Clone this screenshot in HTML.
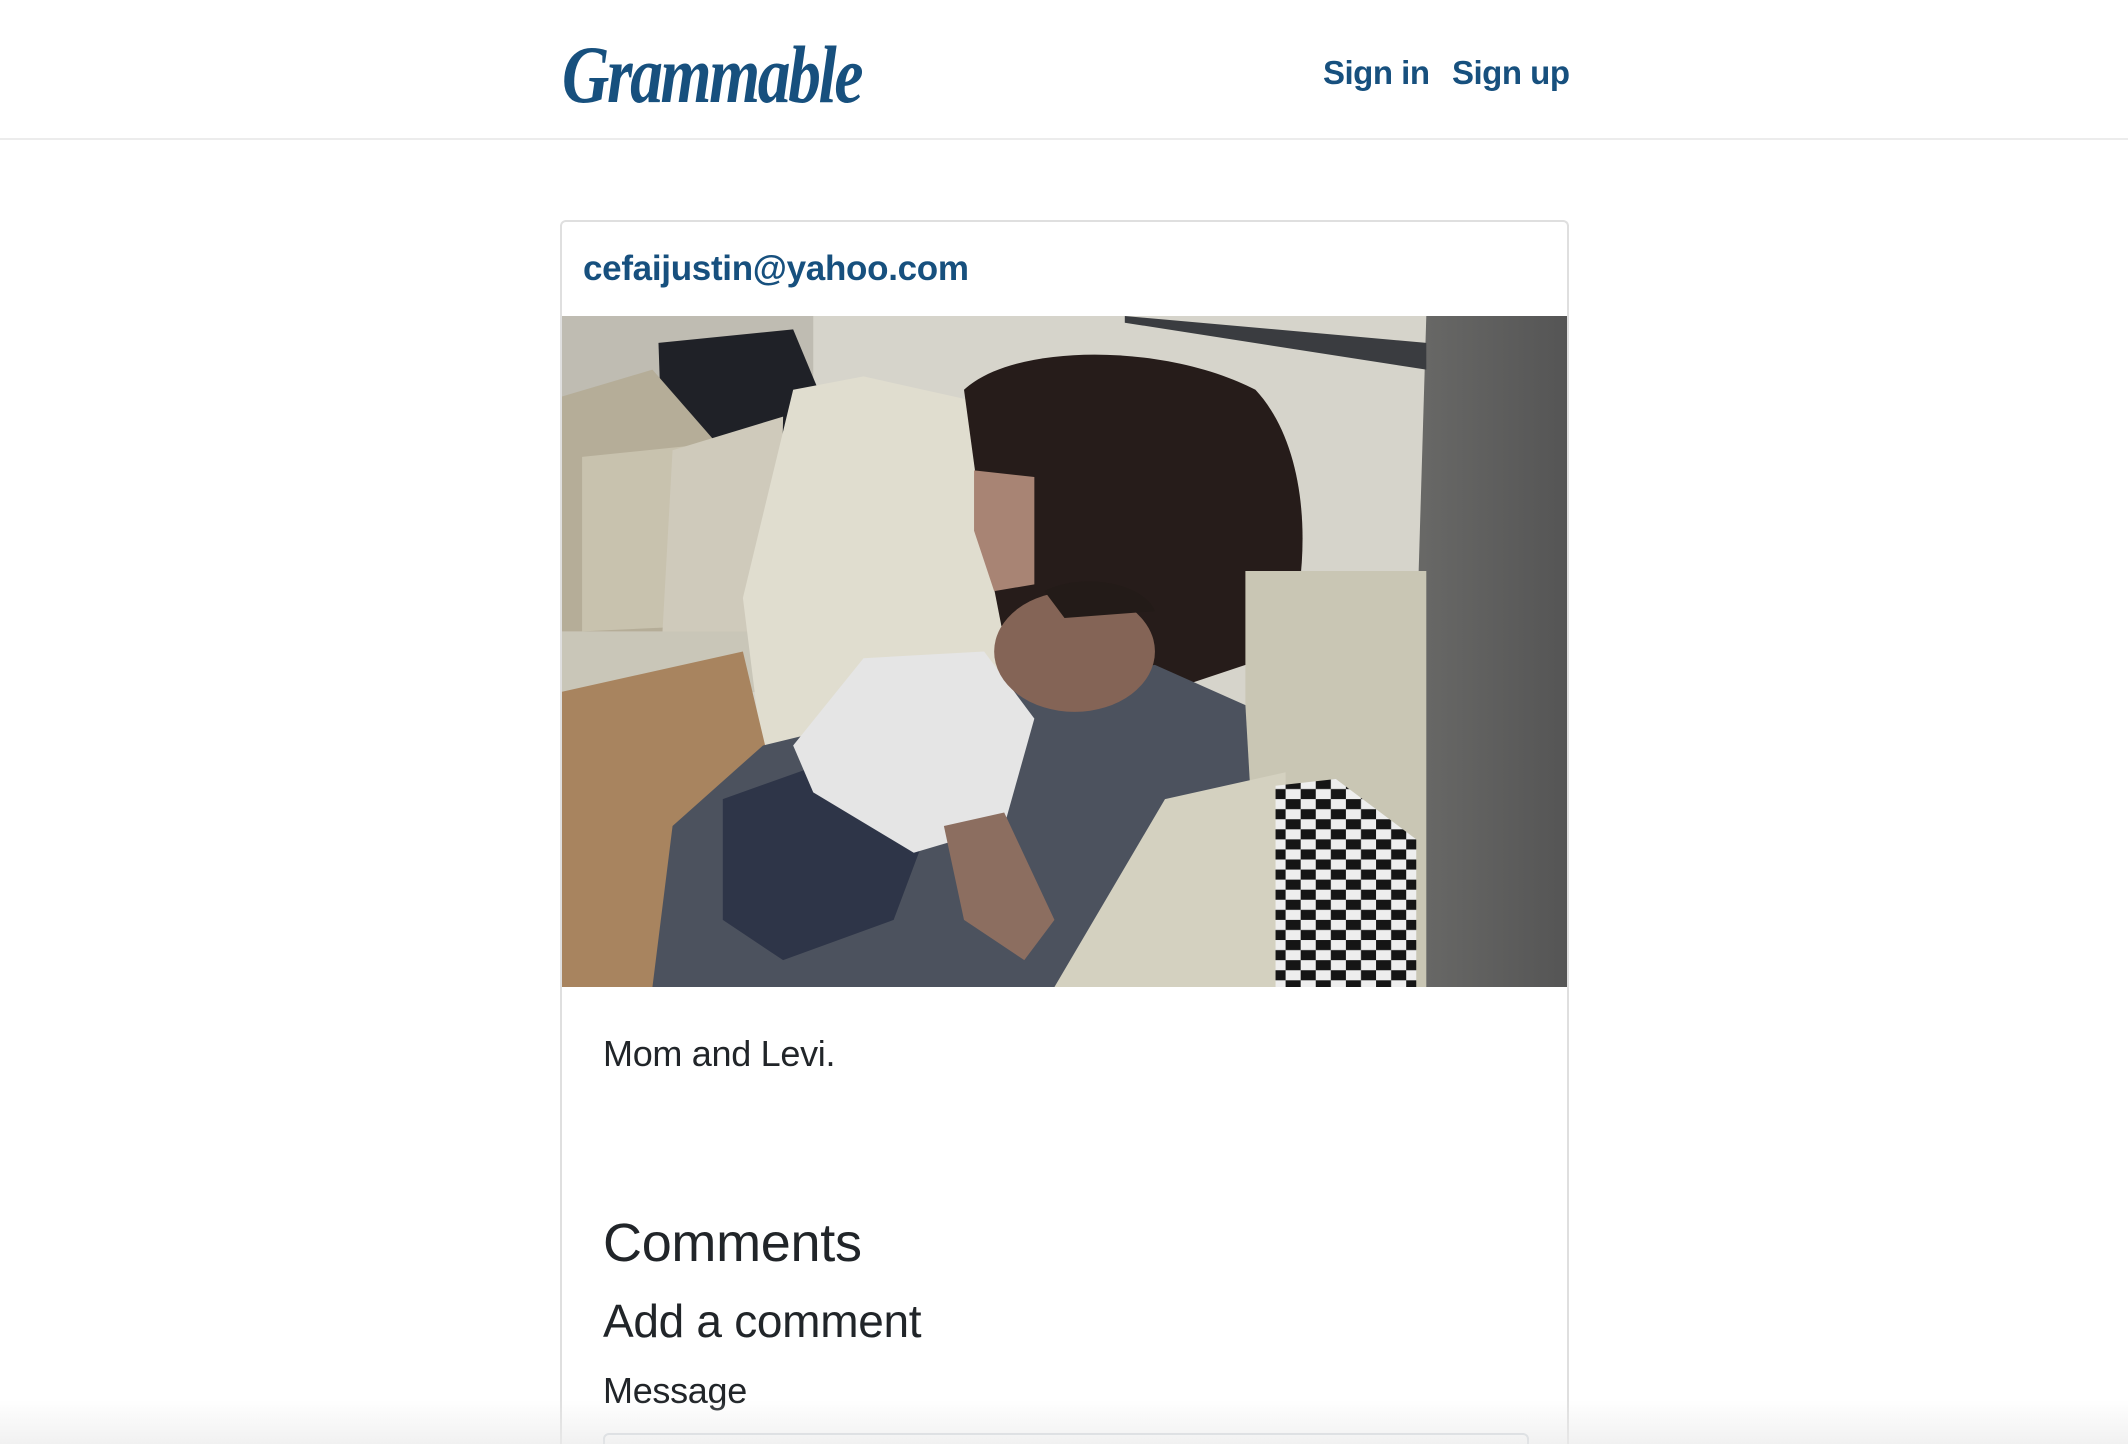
<!DOCTYPE html>
<html><head><meta charset="utf-8"><style>
html,body{margin:0;padding:0;background:#fff;width:2128px;height:1444px;overflow:hidden;font-family:"Liberation Sans",Arial,sans-serif;position:relative}
.hdr{position:absolute;left:0;top:0;width:2128px;height:138px;border-bottom:2px solid #ececec;}
.logo{position:absolute;left:562px;top:28px;font-family:"Liberation Serif",serif;font-style:italic;font-weight:bold;font-size:82px;color:#17507e;letter-spacing:-3px;transform:scaleX(0.8);transform-origin:left top;}
.nav{position:absolute;top:54px;font-weight:bold;font-size:33px;color:#17507e;letter-spacing:-0.5px}
.card{position:absolute;left:560px;top:220px;width:1005px;height:1224px;border:2px solid #dfdfdf;border-bottom:none;border-radius:6px 6px 0 0;overflow:hidden;}
.email{position:absolute;left:21px;top:27px;font-weight:bold;font-size:35px;color:#17507e;letter-spacing:-0.3px}
.img{position:absolute;left:0;top:94px;width:1005px;height:671px;}
.t{position:absolute;left:41px;color:#212529;letter-spacing:-0.3px}
.inp{position:absolute;left:41px;top:1211px;width:922px;height:60px;border:2px solid #ced4da;border-radius:6px}
.fade{position:absolute;left:0;top:1400px;width:2128px;height:44px;background:linear-gradient(rgba(240,240,240,0),rgba(235,235,235,.7));}
</style></head><body>
<div class="hdr">
<div class="logo">Grammable</div>
<div class="nav" style="left:1323px">Sign in</div>
<div class="nav" style="left:1452px">Sign up</div>
</div>
<div class="card">
<div class="email">cefaijustin@yahoo.com</div>
<svg class="img" viewBox="0 0 1000 1000" preserveAspectRatio="none">
<defs>
<linearGradient id="r" x1="0" x2="1"><stop offset="0" stop-color="#6a6a68"/><stop offset="1" stop-color="#555"/></linearGradient>
<pattern id="h" width="30" height="30" patternUnits="userSpaceOnUse"><rect width="30" height="30" fill="#eee"/><path d="M0 0h15v15H0zM15 15h15v15H15z" fill="#151515"/></pattern>
</defs>
<rect width="1000" height="1000" fill="#d6d4cb"/>
<rect x="0" y="0" width="250" height="120" fill="#bfbcb2"/>
<path d="M860 0H1000V1000H840Z" fill="url(#r)"/>
<path d="M560 0L860 40V80L560 10Z" fill="#3a3c40"/>
<path d="M96 40L230 20L255 110L240 210L100 215Z" fill="#1f2127"/>
<path d="M0 120L90 80L160 200L150 470L0 480Z" fill="#b5ad98"/>
<path d="M20 210L150 190L165 460L20 470Z" fill="#c8c2ae"/>
<path d="M110 200L220 150L215 520L100 470Z" fill="#cfcabb"/>
<path d="M0 470H200V560L0 570Z" fill="#c9c6b8"/>
<path d="M230 110L300 90L420 130L450 640L200 660L180 420Z" fill="#e0ddcf"/>
<path d="M400 110C450 40 600 40 690 110C740 190 750 350 720 500L600 560L450 560L420 330Z" fill="#261c1a"/>
<path d="M410 230L470 240L470 400L430 410L410 320Z" fill="#a88474"/>
<path d="M680 380L860 380L860 1000L680 1000Z" fill="#c9c6b4"/>
<path d="M0 560L180 500L210 690L160 800L110 1000H0Z" fill="#a8845f"/>
<path d="M110 760L200 640L420 560L590 520L680 580L690 840L560 1000H90Z" fill="#4c525e"/>
<path d="M160 720L310 640L380 700L330 900L220 960L160 900Z" fill="#2e3548"/>
<path d="M230 640L300 510L420 500L470 600L440 760L350 800L250 710Z" fill="#e5e5e5"/>
<ellipse cx="510" cy="500" rx="80" ry="90" fill="#846456"/>
<path d="M480 410C520 380 580 400 590 440L500 450Z" fill="#231b18"/>
<path d="M380 760L440 740L490 900L460 960L400 900Z" fill="#8c6e60"/>
<path d="M490 1000L600 720L720 680L720 1000Z" fill="#d4d1c0"/>
<path d="M710 700L770 690L850 780L850 1000L710 1000Z" fill="url(#h)"/>
</svg>
<div class="t" style="top:811px;font-size:36px">Mom and Levi.</div>
<div class="t" style="top:990px;font-size:54px">Comments</div>
<div class="t" style="top:1072px;font-size:46px">Add a comment</div>
<div class="t" style="top:1148px;font-size:36px">Message</div>
<div class="inp"></div>
</div>
<div class="fade"></div>
</body></html>
